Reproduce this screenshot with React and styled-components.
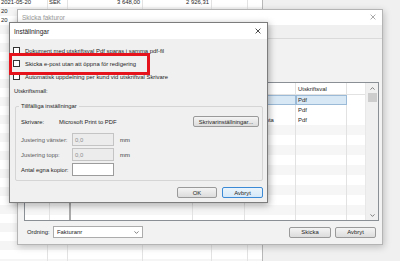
import React from 'react';
import styled, { createGlobalStyle } from 'styled-components';

const Global = createGlobalStyle`
  html, body { margin: 0; padding: 0; }
  body {
    width: 400px; height: 261px; overflow: hidden; background: #f0f0f0;
    font-family: "Liberation Sans", Arial, sans-serif; font-size: 5.9px; color: #1e1e1e;
  }
  * { box-sizing: border-box; }
`;

const Desktop = styled.div`
  position: relative; width: 400px; height: 261px; overflow: hidden; background: #f0f0f0;
`;

/* ---------- background spreadsheet ---------- */
const Sheet = styled.div`
  display: flex; flex-direction: column; margin-top: -2px;
`;
const SheetRow = styled.div`
  display: grid;
  grid-template-columns: 48px 20px 75px 69px 36px 15px;
  width: 263px; height: 9px;
  background: ${p => (p.$alt ? '#f5f5f5' : '#ffffff')};
`;
const SheetCell = styled.div`
  border-right: ${p => (p.$strong ? '1px solid #b8b8b8' : '1px solid #e3e3e3')};
  padding: 0 ${p => (p.$right ? 2 : 1)}px; line-height: 9px; white-space: nowrap; overflow: hidden;
  text-align: ${p => (p.$right ? 'right' : 'left')};
`;

/* ---------- windows ---------- */
const Window = styled.div`
  position: absolute;
  left: ${p => p.$x}px; top: ${p => p.$y}px; width: ${p => p.$w}px; height: ${p => p.$h}px;
  display: flex; flex-direction: column;
  background: #f0f0f0;
  border: 1px solid ${p => (p.$active ? '#7c7c7c' : '#b4b4b4')};
  box-shadow: 1px 2px 7px rgba(0, 0, 0, ${p => (p.$active ? 0.35 : 0.22)});
`;
const TitleBar = styled.div`
  flex: none; height: ${p => p.$h}px; background: #fff;
  display: flex; align-items: center; justify-content: space-between;
  padding: 0 6px ${p => p.$lift}px 4px;
`;
const TitleText = styled.span`
  font-size: 6.5px; color: ${p => (p.$inactive ? '#9a9a9a' : '#1a1a1a')};
`;
const CloseIcon = ({ color }) => (
  <svg width="6" height="6" viewBox="0 0 6 6">
    <path d="M0.6 0.6L5.4 5.4M5.4 0.6L0.6 5.4" stroke={color} strokeWidth="0.75" />
  </svg>
);

/* ---------- outer window ---------- */
const MenuBand = styled.div`
  flex: none; height: 14px; border-bottom: 1px solid #dadada; background: #f0f0f0;
`;
const OuterBody = styled.div`
  flex: 1; display: flex; flex-direction: column; padding: 43px 3px 0 6px; background: #f2f2f2;
`;
const Table = styled.div`
  flex: none; height: 139px; display: flex; border: 1px solid #8a8f96; background: #fff;
`;
const TableMain = styled.div`
  flex: 1; display: flex; flex-direction: column; overflow: hidden;
`;
const TRow = styled.div`
  flex: none; display: flex; height: ${p => (p.$head ? 12 : 10)}px;
  background: ${p => (p.$alt ? '#f6f6f6' : '#fff')};
  border-bottom: ${p => (p.$head ? '1px solid #e2e2e2' : 'none')};
`;
const TCell = styled.div`
  flex: none; width: ${p => p.$w}px;
  border-right: ${p => (p.$thick ? '2px solid #a9a9a9' : '1px solid #e2e2e2')};
  padding-left: 2px; white-space: nowrap; overflow: hidden;
  display: flex; align-items: center;
  background: ${p => (p.$sel ? '#d9e8f5' : 'transparent')};
  outline: ${p => (p.$sel ? '1px solid #9bbad8' : 'none')};
  outline-offset: -1px;
`;
const TFill = styled.div` flex: 1; `;
const ScrollBar = styled.div`
  flex: none; width: 13px; background: #f0f0f0; border-left: 1px solid #e8e8e8;
  display: flex; flex-direction: column; align-items: center;
`;
const ScrollArrow = styled.div`
  flex: none; height: 10px; width: 100%; display: flex; align-items: center; justify-content: center;
`;
const ScrollThumb = styled.div`
  flex: none; width: 9px; height: 9px; background: #cdcdcd;
`;
const ScrollTrack = styled.div` flex: 1; `;
const Chevron = ({ up }) => (
  <svg width="5" height="3" viewBox="0 0 5 3">
    <path d={up ? 'M0.5 2.6L2.5 0.6L4.5 2.6' : 'M0.5 0.4L2.5 2.4L4.5 0.4'} fill="none" stroke="#606060" strokeWidth="0.8" />
  </svg>
);

const Footer = styled.div`
  flex: none; display: flex; align-items: center; height: 12px; margin-top: 5px; padding: 0 3px 0 3px;
`;
const FooterLabel = styled.span` width: 26px; `;
const Combo = styled.div`
  width: 90px; height: 12px; background: #fff; border: 1px solid #acacac;
  display: flex; align-items: center; justify-content: space-between; padding-left: 3px;
`;
const ComboButton = styled.div`
  width: 11px; height: 100%; display: flex; align-items: center; justify-content: center;
`;
const Spacer = styled.div` flex: 1; `;
const Button = styled.div`
  flex: none; width: ${p => p.$w}px; height: 11px; margin-left: ${p => p.$ml || 0}px;
  display: flex; align-items: center; justify-content: center;
  background: ${p => (p.$focus ? 'linear-gradient(#eaf4fc, #d6e9f8)' : 'linear-gradient(#f4f4f4, #dcdcdc)')};
  border: 1px solid ${p => (p.$focus ? '#3c8ad6' : '#9a9a9a')};
  border-radius: 2px;
`;

/* ---------- inner window ---------- */
const InnerBody = styled.div`
  flex: 1; display: flex; flex-direction: column; padding: 5px 4px 0 3px;
`;
const CheckRow = styled.div`
  flex: none; height: 13px; display: flex; align-items: center; gap: 5px;
`;
const CheckBox = styled.span`
  flex: none; width: 7px; height: 7px; background: #fff; border: 1px solid #333;
`;
const SectionLabel = styled.div`
  flex: none; height: 8px; line-height: 8px; margin: 4px 0 0 1px;
`;
const GroupBox = styled.div`
  position: relative; flex: none; margin: 11px 0 0 2px; padding: 9px 3px 4px 5px;
  border: 1px solid #d5d5d5; border-radius: 2px;
  display: flex; flex-direction: column;
`;
const Legend = styled.span`
  position: absolute; top: -4px; left: 3px; padding: 0 2px; background: #f0f0f0; line-height: 7px;
`;
const PrinterRow = styled.div`
  flex: none; height: 11px; display: flex; align-items: center; margin-bottom: 6px;
`;
const FieldLabel = styled.span`
  flex: none; width: ${p => p.$w}px; color: ${p => (p.$dim ? '#5c5c5c' : '#1e1e1e')};
`;
const FieldRow = styled.div`
  flex: none; height: 13px; display: flex; align-items: center; margin-top: ${p => p.$mt || 0}px;
`;
const Input = styled.div`
  flex: none; width: 42px; height: 13px; padding-left: 2px;
  display: flex; align-items: center;
  background: ${p => (p.$disabled ? '#ececec' : '#fff')};
  border: 1px solid ${p => (p.$disabled ? '#c4c4c4' : '#9c9c9c')};
  color: #8f8f8f;
`;
const Unit = styled.span` margin-left: 6px; color: #3a3a3a; `;
const ButtonRow = styled.div`
  flex: none; display: flex; justify-content: flex-end; margin-top: 6px;
`;

const Highlight = styled.div`
  position: absolute; left: 9px; top: 53px; width: 141px; height: 22px;
  border: 3px solid #e5141c;
`;

const sheetRows = Array.from({ length: 30 }, (_, i) => i);
const tableRows = [
  { type: '', val: 'Pdf', sel: true },
  { type: '', val: 'Pdf' },
  { type: 'Kreditnota', val: 'Pdf' },
  ...Array.from({ length: 10 }, () => ({ type: '', val: '' })),
];
const cols = [25, 21, 122, 52, 51, 51];

const firstCell = i => (i === 0 ? '2021-05-20' : i < 3 ? '20' : '');

export default function App() {
  return (
    <Desktop>
      <Global />
      <Sheet>
        {sheetRows.map(i => (
          <SheetRow key={i} $alt={i % 2 === 1}>
            <SheetCell>{firstCell(i)}</SheetCell>
            <SheetCell>{i === 0 ? 'SEK' : ''}</SheetCell>
            <SheetCell $right>{i === 0 ? '3 648,00' : ''}</SheetCell>
            <SheetCell $right>{i === 0 ? '2 926,31' : ''}</SheetCell>
            <SheetCell />
            <SheetCell $strong />
          </SheetRow>
        ))}
      </Sheet>

      <Window $x={17} $y={9} $w={366} $h={236}>
        <TitleBar $h={15} $lift={1}>
          <TitleText $inactive>Skicka fakturor</TitleText>
          <CloseIcon color="#8c8c8c" />
        </TitleBar>
        <MenuBand />
        <OuterBody>
          <Table>
            <TableMain>
              <TRow $head>
                {cols.map((w, c) => (
                  <TCell key={c} $w={w} $thick={c === 1}>{c === 5 ? 'Utskriftsval' : ''}</TCell>
                ))}
                <TFill />
              </TRow>
              {tableRows.map((r, i) => (
                <TRow key={i} $alt={i > 2 && i % 2 === 1}>
                  {cols.map((w, c) => (
                    <TCell key={c} $w={w} $thick={c === 1} $sel={r.sel && c >= 2}>
                      {c === 4 ? r.type : c === 5 ? r.val : ''}
                    </TCell>
                  ))}
                  <TFill />
                </TRow>
              ))}
            </TableMain>
            <ScrollBar>
              <ScrollArrow><Chevron up /></ScrollArrow>
              <ScrollThumb />
              <ScrollTrack />
              <ScrollArrow><Chevron /></ScrollArrow>
            </ScrollBar>
          </Table>
          <Footer>
            <FooterLabel>Ordning:</FooterLabel>
            <Combo>
              <span>Fakturanr</span>
              <ComboButton><Chevron /></ComboButton>
            </Combo>
            <Spacer />
            <Button $w={42}>Skicka</Button>
            <Button $w={41} $ml={4}>Avbryt</Button>
          </Footer>
        </OuterBody>
      </Window>

      <Window $x={9} $y={22} $w={259} $h={181} $active>
        <TitleBar $h={16} $lift={0}>
          <TitleText>Inställningar</TitleText>
          <CloseIcon color="#111" />
        </TitleBar>
        <InnerBody>
          <CheckRow><CheckBox /><span>Dokument med utskriftsval Pdf sparas i samma pdf-fil</span></CheckRow>
          <CheckRow><CheckBox /><span>Skicka e-post utan att öppna för redigering</span></CheckRow>
          <CheckRow><CheckBox /><span>Automatisk uppdelning per kund vid utskriftval Skrivare</span></CheckRow>
          <SectionLabel>Utskriftsmall:</SectionLabel>
          <GroupBox>
            <Legend>Tillfälliga inställningar</Legend>
            <PrinterRow>
              <FieldLabel $w={38}>Skrivare:</FieldLabel>
              <span>Microsoft Print to PDF</span>
              <Spacer />
              <Button $w={66}>Skrivarinställningar...</Button>
            </PrinterRow>
            <FieldRow>
              <FieldLabel $w={51} $dim>Justering vänster:</FieldLabel>
              <Input $disabled>0,0</Input>
              <Unit>mm</Unit>
            </FieldRow>
            <FieldRow $mt={2}>
              <FieldLabel $w={51} $dim>Justering topp:</FieldLabel>
              <Input $disabled>0,0</Input>
              <Unit>mm</Unit>
            </FieldRow>
            <FieldRow $mt={2}>
              <FieldLabel $w={51}>Antal egna kopior:</FieldLabel>
              <Input />
            </FieldRow>
          </GroupBox>
          <ButtonRow>
            <Button $w={40}>OK</Button>
            <Button $w={41} $ml={5} $focus>Avbryt</Button>
          </ButtonRow>
        </InnerBody>
      </Window>

      <Highlight />
    </Desktop>
  );
}
